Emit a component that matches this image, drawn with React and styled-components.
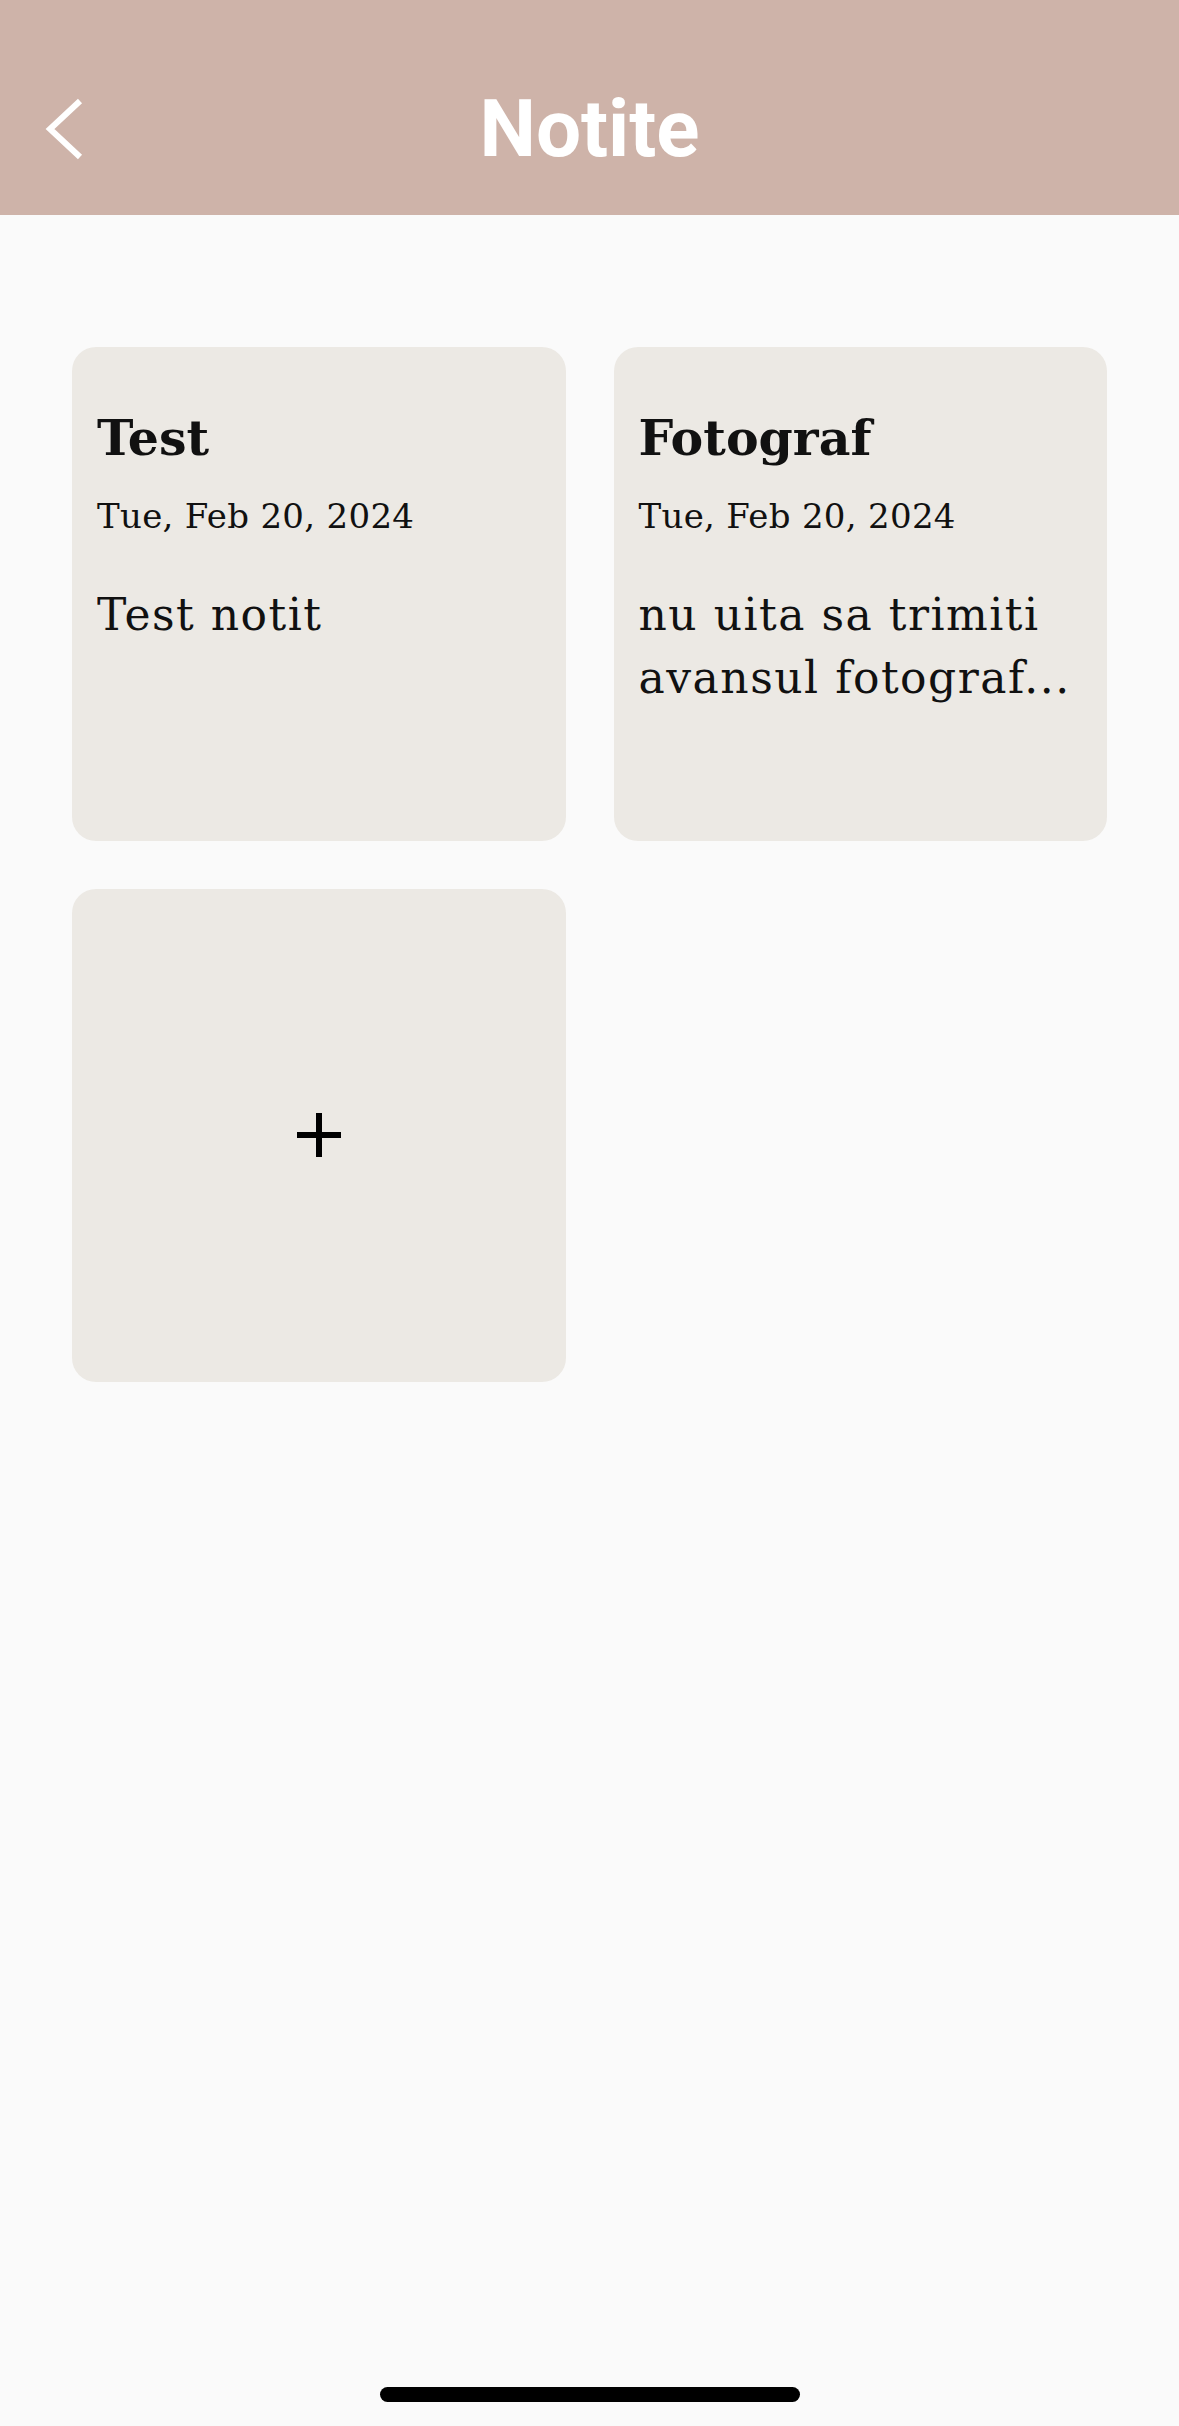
import React from "react";
import styled, { createGlobalStyle } from "styled-components";

const notes = [
    { id: 1, title: "Test", date: "Tue, Feb 20, 2024", body: "Test notit" },
    { id: 2, title: "Fotograf", date: "Tue, Feb 20, 2024", body: "nu uita sa trimiti avansul fotografului" },
];

// taie textul lung ca in preview-ul din aplicatie
const preview = (text, max = 35) => (text.length > max ? text.slice(0, max) + "..." : text);

function App() {
    return (
        <>
            <GlobalStyle />
            <Screen>
                <Header>
                    <BackButton aria-label="Inapoi">
                        <svg width="40" height="64" viewBox="0 0 40 64" fill="none">
                            <path d="M35 4 L5 32 L35 60" stroke="#fff" strokeWidth="6" strokeLinecap="butt" strokeLinejoin="miter" />
                        </svg>
                    </BackButton>
                    <Title>Notite</Title>
                </Header>

                <NotesGrid>
                    {notes.map((n) => (
                        <NoteCard key={n.id}>
                            <NoteTitle>{n.title}</NoteTitle>
                            <NoteDate>{n.date}</NoteDate>
                            <NoteBody>{preview(n.body)}</NoteBody>
                        </NoteCard>
                    ))}
                    <AddCard aria-label="Adauga notita">
                        <svg width="44" height="44" viewBox="0 0 44 44">
                            <path d="M22 0 V44 M0 22 H44" stroke="#000" strokeWidth="6" />
                        </svg>
                    </AddCard>
                </NotesGrid>

                <HomeBar />
            </Screen>
        </>
    );
}

export default App;

const GlobalStyle = createGlobalStyle`
    html, body {
        margin: 0;
        padding: 0;
        background: #fafafa;
    }
    * { box-sizing: border-box; }
`

const Screen = styled.div`
    width: 1179px;
    height: 2426px;
    background: #fafafa;
    display: flex;
    flex-direction: column;
    overflow: hidden;
`

const Header = styled.header`
    height: 215px;
    flex-shrink: 0;
    background-color: #ceb3a9;
    padding-top: 86px;
    padding-bottom: 43px;
    display: grid;
    grid-template-columns: 1fr auto 1fr;
    align-items: center;
`

const BackButton = styled.div`
    justify-self: start;
    margin-left: 45px;
    display: flex;
    align-items: center;
    height: 86px;
`

const Title = styled.h1`
    margin: 0;
    color: #fff;
    font-family: Roboto, "Liberation Sans", sans-serif;
    font-weight: 700;
    font-size: 80px;
    line-height: 86px;
`

const NotesGrid = styled.main`
    display: grid;
    grid-template-columns: 1fr 1fr;
    gap: 48px;
    padding: 132px 72px 0;
    flex: 1;
    align-content: start;
`

const Card = styled.div`
    aspect-ratio: 1 / 1;
    background-color: #ece9e4;
    border-radius: 24px;
`

const NoteCard = styled(Card)`
    padding: 63px 25px 0;
    font-family: "DejaVu Serif", "Liberation Serif", serif;
    color: #111;
`

const NoteTitle = styled.h2`
    margin: 0;
    font-size: 49px;
    font-weight: 700;
    line-height: 57.6px;
`

const NoteDate = styled.div`
    margin-top: 28px;
    font-size: 34px;
    line-height: 40.8px;
    letter-spacing: 0.3px;
`

const NoteBody = styled.p`
    margin: 47px 0 0;
    font-size: 44px;
    line-height: 63px;
    letter-spacing: 1.5px;
    display: -webkit-box;
    -webkit-line-clamp: 2;
    -webkit-box-orient: vertical;
    overflow: hidden;
`

const AddCard = styled(Card)`
    display: flex;
    align-items: center;
    justify-content: center;
`

const HomeBar = styled.div`
    align-self: center;
    width: 420px;
    height: 15px;
    border-radius: 8px;
    background: #000;
    margin-bottom: 24px;
`
